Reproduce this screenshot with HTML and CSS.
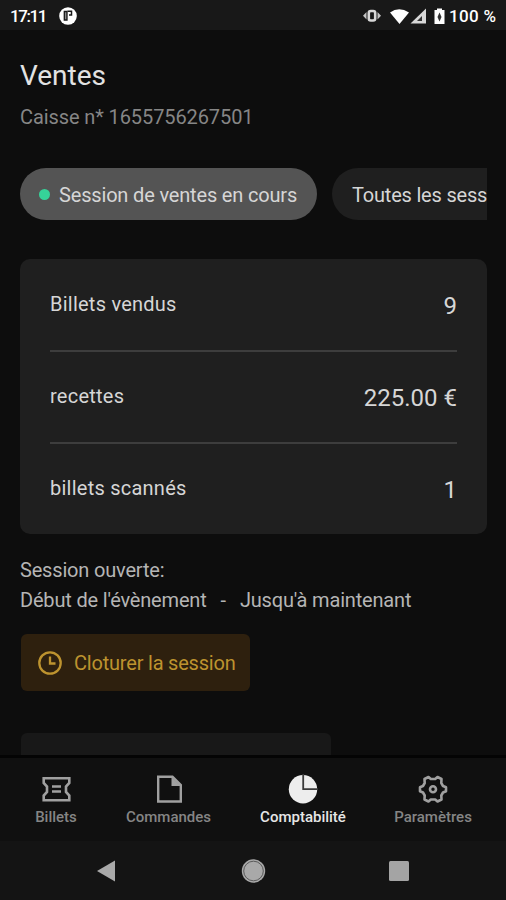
FILE: index.html
```html
<!DOCTYPE html>
<html lang="fr">
<head>
<meta charset="utf-8">
<title>Ventes</title>
<link rel="stylesheet" href="styles.css">
</head>
<body>
<div class="app">
  <header class="status">
    <span class="clock">17:11</span>
    <svg class="status-app" width="18" height="18" viewBox="0 0 18 18"><circle cx="9" cy="9" r="8.8" fill="#fff"/><path d="M5.300 4.500H8v8.500H5.300z" fill="#888" stroke="#171717" stroke-width="1.3"/><path d="M8.500 4.200h4v3.800H10" fill="none" stroke="#171717" stroke-width="1.500"/></svg>
    <svg class="status-icons" width="84" height="20" viewBox="0 0 84 20">
      <rect x="5.800" y="5" width="6.400" height="9.500" rx="2" fill="none" stroke="#d8d8d8" stroke-width="2.600"/>
      <path d="M3.500 6L0 9.750L3.500 13.500ZM14.500 6L18 9.750L14.500 13.500Z" fill="#c4c4c4"/>
      <path d="M27 6.500Q36 0 46 6.500L36.500 18Z" fill="#fff"/>
      <path d="M47.500 17.500L63 2.500V17.500Z" fill="#d8d8d8"/><path d="M54 15l5-5v5z" fill="#333"/>
      <path d="M71.500 4h2.500v-1.500h5V4h2.500v14h-10z" fill="#fff"/><path d="M76.500 6.500l-2 4.500 2 4.500 2-4.500z" fill="#333"/>
    </svg>
    <span class="battery">100 %</span>
  </header>
  <main class="content">
    <h1 class="title">Ventes</h1>
    <p class="subtitle">Caisse n* 1655756267501</p>
    <div class="chips">
      <div class="chip chip-active"><i class="dot"></i><span>Session de ventes en cours</span></div>
      <div class="chip"><span>Toutes les sess</span></div>
    </div>
    <section class="card">
      <div class="row"><span class="label">Billets vendus</span><span class="value">9</span></div>
      <div class="row"><span class="label">recettes</span><span class="value">225.00 €</span></div>
      <div class="row"><span class="label">billets scannés</span><span class="value">1</span></div>
    </section>
    <div class="session">
      <p class="opened">Session ouverte:</p>
      <p class="range"><span>Début de l'évènement</span><span>-</span><span>Jusqu'à maintenant</span></p>
    </div>
    <div class="close-btn">
      <svg width="26" height="26" viewBox="0 0 26 26" fill="none" stroke="#bd932f" stroke-width="2.300"><circle cx="13" cy="13" r="10.700"/><path d="M13 6.500V13.500H18.500"/></svg>
      <span>Cloturer la session</span>
    </div>
    <div class="next-block"></div>
  </main>
  <nav class="tabs">
    <div class="tab t1">
      <svg width="30" height="30" viewBox="0 0 30 30" fill="none" stroke="#a0a0a0" stroke-width="2.600"><path d="M2.700 4.200H28.300V9L25 12.500V18L28.300 21.500V26.200H2.700V21.500L6 18V12.500L2.700 9Z"/><path d="M11 12.500h9M11 17.500h9"/></svg>
      <span>Billets</span>
    </div>
    <div class="tab t2">
      <svg width="30" height="30" viewBox="0 0 30 30" fill="none" stroke="#a0a0a0" stroke-width="2.400"><path d="M4.200 2.700H18.500L26.800 11V27.500H4.200Z"/><path d="M17.500 2.700L26.800 12H17.500Z" fill="#a0a0a0" stroke="none"/></svg>
      <span>Commandes</span>
    </div>
    <div class="tab t3 tab-active">
      <svg width="30" height="30" viewBox="0 0 30 30"><circle cx="15" cy="15.300" r="14.200" fill="#ededed"/><path d="M15.200 0V15.200H30" fill="none" stroke="#3a3a3a" stroke-width="1.800"/></svg>
      <span>Comptabilité</span>
    </div>
    <div class="tab t4">
      <svg width="30" height="30" viewBox="0 0 30 30" fill="none" stroke="#a0a0a0" stroke-width="2.600" stroke-linejoin="round"><path d="M10.500 3L12.800 5H17.200L19.500 3L23.500 5L23.300 9L25 12L28 13.300V17.200L25 18.500L23.300 21.500L23.500 25.500L19.500 27.500L17.200 25.500H12.800L10.500 27.500L6.500 25.500L6.700 21.500L5 18.500L2 17.200V13.300L5 12L6.700 9L6.500 5Z"/><circle cx="15" cy="15.200" r="3"/></svg>
      <span>Paramètres</span>
    </div>
  </nav>
  <footer class="system">
    <svg width="20" height="24" viewBox="0 0 20 24"><path d="M1 12L19 1.500V22.500Z" fill="#a9a9a9"/></svg>
    <svg width="26" height="26" viewBox="0 0 26 26"><circle cx="13.500" cy="13" r="11.700" fill="#a9a9a9"/><circle cx="13.500" cy="13" r="9.800" fill="none" stroke="#5a5a5a" stroke-width="1"/></svg>
    <svg width="20" height="20" viewBox="0 0 20 20"><rect width="20" height="20" rx="1.500" fill="#a4a4a4"/></svg>
  </footer>
</div>
</body>
</html>
```
FILE: styles.css
```css
* { box-sizing: border-box; margin: 0; padding: 0; }
body { background: #0d0d0d; font-family: Roboto, sans-serif; color: #d6d6d6; overflow: hidden; }
.app { width: 506px; height: 900px; display: flex; flex-direction: column; }
svg { display: block; flex: none; }
span { white-space: nowrap; }

.status { height: 30px; background: #181818; display: flex; align-items: center; padding: 2px 9px 0 10px; color: #fff; font-weight: 500; font-size: 17px; }
.clock { width: 49px; letter-spacing: -1.4px; }
.status-icons { margin: 0 2px 0 auto; }
.battery { width: 48px; letter-spacing: 0.3px; }

.content { height: 725px; padding: 0 19px 0 20px; overflow: hidden; flex: none; }
.title { font-size: 28px; line-height: 34px; font-weight: 400; margin-top: 29px; color: #e2e2e2; }
.subtitle { font-size: 20px; line-height: 24px; margin-top: 12px; color: #868686; letter-spacing: -0.1px; }

.chips { display: flex; gap: 15px; margin-top: 39px; overflow: hidden; }
.chip { flex: 1 0 auto; height: 52px; border-radius: 26px 0 0 26px; background: #1f1f1f; padding: 2px 0 0 20px; display: flex; align-items: center; font-size: 20px; letter-spacing: -0.2px; }
.chip-active { flex: none; border-radius: 26px; background: #545454; width: 297px; padding-left: 19px; letter-spacing: -0.17px; }
.dot { flex: none; width: 11px; height: 11px; border-radius: 50%; background: #36d399; margin: -2px 9px 0 0; }

.card { margin-top: 39px; height: 275px; border-radius: 10px; background: #1f1f1f; padding: 0 30px; }
.row { height: 92px; display: flex; justify-content: space-between; align-items: center; border-bottom: 2px solid #3d3d3d; padding-bottom: 2px; }
.row:first-child { height: 93px; padding-bottom: 1px; }
.row:last-child { border-bottom: 0; height: 90px; }
.label { font-size: 20px; letter-spacing: 0.24px; }
.value { font-size: 24px; padding-top: 3px; }
.row:last-child .value { padding-top: 4px; }

.session { margin-top: 21px; font-size: 20px; line-height: 30px; color: #b5b5b5; letter-spacing: -0.18px; }
.range { display: flex; gap: 14px; }

.close-btn { margin: 19px 0 0 1px; width: 229px; height: 57px; border-radius: 6px; background: #2e200e; color: #bd932f; padding-left: 16px; display: flex; align-items: center; gap: 11px; font-size: 20px; letter-spacing: -0.2px; }
.next-block { margin: 42px 0 0 1px; width: 310px; height: 40px; border-radius: 6px; background: #181818; }

.tabs { height: 86px; flex: none; background: #101010; border-top: 3px solid #040404; padding: 16px 0 0; display: flex; }
.tab { display: flex; flex-direction: column; align-items: center; color: #858585; font-size: 15px; font-weight: 500; line-height: 20px; gap: 3px; }
.t1 { width: 112px; }
.t2 { width: 113px; }
.t3 { width: 156px; }
.t4 { width: 104px; }
.tab-active { color: #e6e6e6; }

.system { height: 59px; flex: none; background: #141414; display: flex; justify-content: space-between; align-items: center; padding: 0 97px 0 96px; }
```
